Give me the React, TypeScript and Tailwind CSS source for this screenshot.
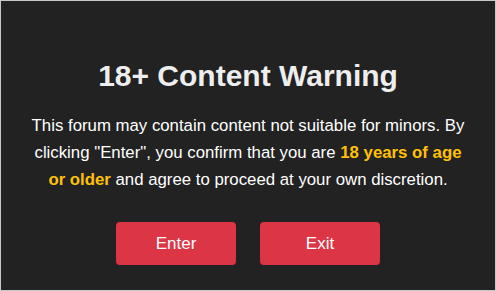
const AgeGate = () => {
  return (
    <div className="w-[496px] h-[291px] border border-[#c8c8c8] bg-[#222222] flex flex-col items-center pt-[57px] font-['Liberation_Sans',Arial,sans-serif]">
      {/* Heading */}
      <h1 className="text-[30px] leading-[36px] font-bold text-[#eeeeee]">18+ Content Warning</h1>

      {/* Message */}
      <p className="mt-[18px] w-[446px] text-center text-[16.8px] leading-[27px] text-white">
        This forum may contain content not suitable for minors. By clicking "Enter", you confirm that you are{" "}
        <span className="font-bold text-[#ffc107]">18 years of age or older</span> and agree to proceed at your own
        discretion.
      </p>

      {/* Actions */}
      <div className="mt-[29px] flex gap-6">
        <button className="w-[120px] h-[43px] rounded bg-[#dc3545] text-[17px] text-white">Enter</button>
        <button className="w-[120px] h-[43px] rounded bg-[#dc3545] text-[17px] text-white">Exit</button>
      </div>
    </div>
  )
}

export default function App() {
  return <AgeGate />
}
